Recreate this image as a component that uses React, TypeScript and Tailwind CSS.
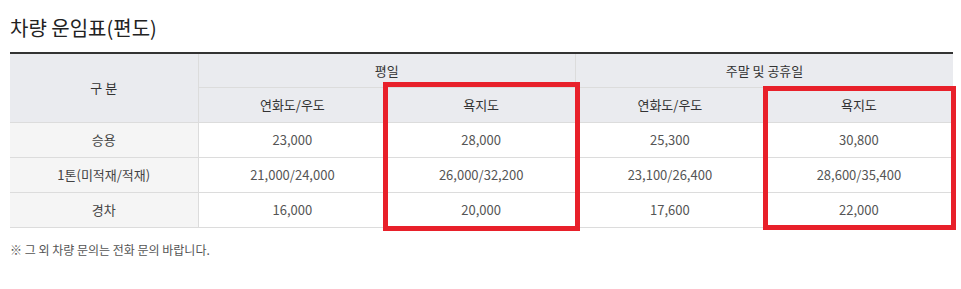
import React from 'react';

const rows = [
  { name: '승용', cells: ['23,000', '28,000', '25,300', '30,800'] },
  { name: '1톤(미적재/적재)', cells: ['21,000/24,000', '26,000/32,200', '23,100/26,400', '28,600/35,400'] },
  { name: '경차', cells: ['16,000', '20,000', '17,600', '22,000'] },
];

export default function App() {
  return (
    <div
      className="w-[961px] h-[289px] bg-white pl-[10px] pr-[8px] pt-[15px]"
      style={{ fontFamily: '"Noto Sans CJK KR", "Noto Sans", sans-serif' }}
    >
      <h2 className="text-[20px] leading-[26px] font-normal text-[#222]">차량 운임표(편도)</h2>

      <div className="relative mt-[11px] w-[943px]">
        <table className="w-full table-fixed border-collapse border-t-2 border-t-[#333] text-[13px]">
          <thead>
            <tr className="h-[34px] bg-[#eaebef] text-[#333]">
              <th rowSpan={2} className="font-normal border-b border-[#dcdcdc] border-r w-[188px]">구 분</th>
              <th colSpan={2} className="font-normal border-b border-r border-[#dcdcdc]">평일</th>
              <th colSpan={2} className="font-normal border-b border-[#dcdcdc]">주말 및 공휴일</th>
            </tr>
            <tr className="h-[35px] bg-[#eaebef] text-[#333]">
              <th className="font-normal border-b border-r border-[#dcdcdc] w-[189px]">연화도/우도</th>
              <th className="font-normal border-b border-r border-[#dcdcdc] w-[190px]">욕지도</th>
              <th className="font-normal border-b border-r border-[#dcdcdc] w-[189px]">연화도/우도</th>
              <th className="font-normal border-b border-[#dcdcdc]">욕지도</th>
            </tr>
          </thead>
          <tbody>
            {rows.map((r) => (
              <tr key={r.name} className="h-[35px] text-[#555]">
                <td className="text-center bg-[#f5f5f5] border-b border-r border-[#dcdcdc] text-[#444]">{r.name}</td>
                {r.cells.map((c, i) => (
                  <td
                    key={i}
                    className={i < 3 ? 'text-center border-b border-r border-[#dcdcdc]' : 'text-center border-b border-[#dcdcdc]'}
                  >
                    {c}
                  </td>
                ))}
              </tr>
            ))}
          </tbody>
        </table>

        {/* annotation boxes */}
        <div className="absolute left-[373px] top-[30px] w-[197px] h-[149px] border-[5px] border-[#e8202a]" />
        <div className="absolute left-[753px] top-[34px] w-[193px] h-[144px] border-[5px] border-[#e8202a]" />
      </div>

      <p className="mt-[13px] text-[12px] text-[#555]">※ 그 외 차량 문의는 전화 문의 바랍니다.</p>
    </div>
  );
}
